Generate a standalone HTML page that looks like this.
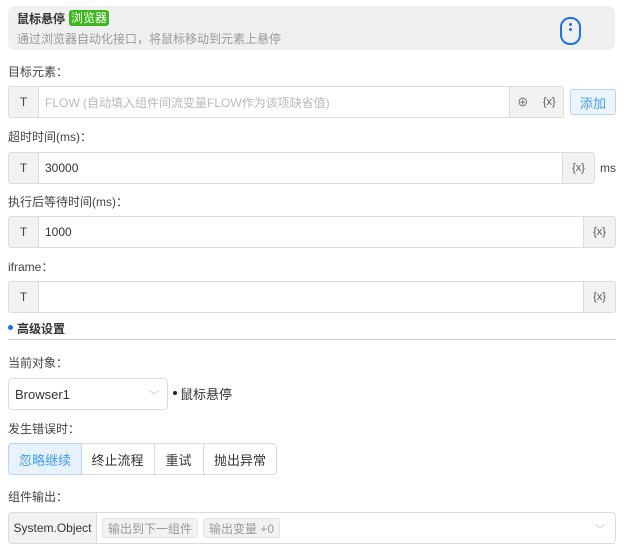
<!DOCTYPE html>
<html><head><meta charset="utf-8"><style>
*{box-sizing:border-box;margin:0;padding:0}
body{width:630px;height:558px;background:#fff;font-family:"Liberation Sans","Noto Sans CJK SC",sans-serif;font-size:12px;color:#333;position:relative;overflow:hidden}
.a{position:absolute}
.lbl{position:absolute;left:8px;font-size:12px;color:#444}
.inp{position:absolute;left:8px;height:32px;border:1px solid #dcdcdc;border-radius:3px;background:#fff;display:flex;overflow:hidden}
.t{width:30px;background:#f2f2f2;border-right:1px solid #dcdcdc;display:flex;align-items:center;justify-content:center;color:#444}
.x{width:32px;background:#f2f2f2;border-left:1px solid #dcdcdc;display:flex;align-items:center;justify-content:center;color:#555;font-size:11px;margin-left:auto}
.v{display:flex;align-items:center;padding-left:6px;color:#333}
.bt{position:absolute;top:443px;height:32px;border:1px solid #dcdcdc;display:flex;align-items:center;justify-content:center;font-size:13px;color:#333}
.tag{height:20px;background:#f2f2f2;border:1px solid #e4e4e4;border-radius:3px;color:#999;font-size:12px;display:flex;align-items:center;padding:0 5px;margin-left:5px}
</style></head><body>
<div class="a" style="left:8px;top:6px;width:607px;height:44px;background:#f0f0f0;border-radius:7px"></div>
<div class="a" style="left:17px;top:10px;font-weight:bold;font-size:12px;color:#333">鼠标悬停</div>
<div class="a" style="left:69px;top:10px;height:16px;padding:0 2px;background:#3cb81e;color:#fff;border-radius:3px;font-size:12px;line-height:16px">浏览器</div>
<div class="a" style="left:17px;top:30px;font-size:12px;color:#999">通过浏览器自动化接口，将鼠标移动到元素上悬停</div>
<div class="a" style="left:560px;top:17px;width:21px;height:28px;border:2.5px solid #1a73e8;border-radius:10px"></div>
<div class="a" style="left:569px;top:23px;width:3px;height:3px;background:#1a73e8;border-radius:50%"></div>
<div class="a" style="left:569px;top:28px;width:3px;height:3px;background:#1a73e8;border-radius:50%"></div>

<div class="lbl" style="top:63px">目标元素：</div>
<div class="inp" style="top:86px;width:556px"><div class="t">T</div><div class="v" style="color:#bbb">FLOW (自动填入组件间流变量FLOW作为该项缺省值)</div>
<div style="margin-left:auto;width:54px;background:#f2f2f2;border-left:1px solid #dcdcdc;display:flex;align-items:center;justify-content:space-around;color:#555;font-size:11px"><span>⊕</span><span>{x}</span></div></div>
<div class="a" style="left:570px;top:89px;width:46px;height:26px;border:1px solid #b3d4fc;background:#ecf4ff;border-radius:3px;color:#409eff;font-size:13px;display:flex;align-items:center;justify-content:center">添加</div>

<div class="lbl" style="top:128px">超时时间(ms)：</div>
<div class="inp" style="top:152px;width:587px"><div class="t">T</div><div class="v">30000</div><div class="x">{x}</div></div>
<div class="a" style="left:600px;top:161px;color:#444">ms</div>

<div class="lbl" style="top:193px">执行后等待时间(ms)：</div>
<div class="inp" style="top:216px;width:608px"><div class="t">T</div><div class="v">1000</div><div class="x">{x}</div></div>

<div class="lbl" style="top:258px">iframe：</div>
<div class="inp" style="top:281px;width:608px"><div class="t">T</div><div class="v"></div><div class="x">{x}</div></div>

<div class="a" style="left:8px;top:325px;width:5px;height:5px;border-radius:50%;background:#1a73e8"></div>
<div class="a" style="left:17px;top:320px;font-weight:bold;color:#333">高级设置</div>
<div class="a" style="left:8px;top:339px;width:608px;height:1px;background:#ccc"></div>

<div class="lbl" style="top:354px">当前对象：</div>
<div class="a" style="left:8px;top:378px;width:160px;height:32px;border:1px solid #dcdcdc;border-radius:4px;display:flex;align-items:center;padding-left:6px;font-size:13px">Browser1<span style="margin-left:auto;margin-right:8px;color:#bbb;font-size:10px">﹀</span></div>
<div class="a" style="left:173px;top:391px;width:4px;height:4px;border-radius:50%;background:#222"></div>
<div class="a" style="left:180px;top:384px;font-size:13px;color:#333">鼠标悬停</div>

<div class="lbl" style="top:420px">发生错误时：</div>
<div class="bt" style="left:8px;width:74px;background:#e8f2ff;border-color:#b3d4fc;color:#409eff;border-radius:4px 0 0 4px">忽略继续</div>
<div class="bt" style="left:81px;width:74px;border-left:none">终止流程</div>
<div class="bt" style="left:154px;width:50px;border-left:none">重试</div>
<div class="bt" style="left:203px;width:74px;border-radius:0 4px 4px 0">抛出异常</div>

<div class="lbl" style="top:488px">组件输出：</div>
<div class="a" style="left:8px;top:512px;width:608px;height:32px;border:1px solid #dcdcdc;border-radius:4px;display:flex;align-items:center;overflow:hidden">
<div style="width:88px;height:100%;background:#f2f2f2;border-right:1px solid #dcdcdc;display:flex;align-items:center;justify-content:center;font-size:12px;color:#333">System.Object</div>
<div class="tag">输出到下一组件</div><div class="tag">输出变量 +0</div>
<span style="margin-left:auto;margin-right:10px;color:#bbb;font-size:10px">﹀</span></div>
</body></html>
